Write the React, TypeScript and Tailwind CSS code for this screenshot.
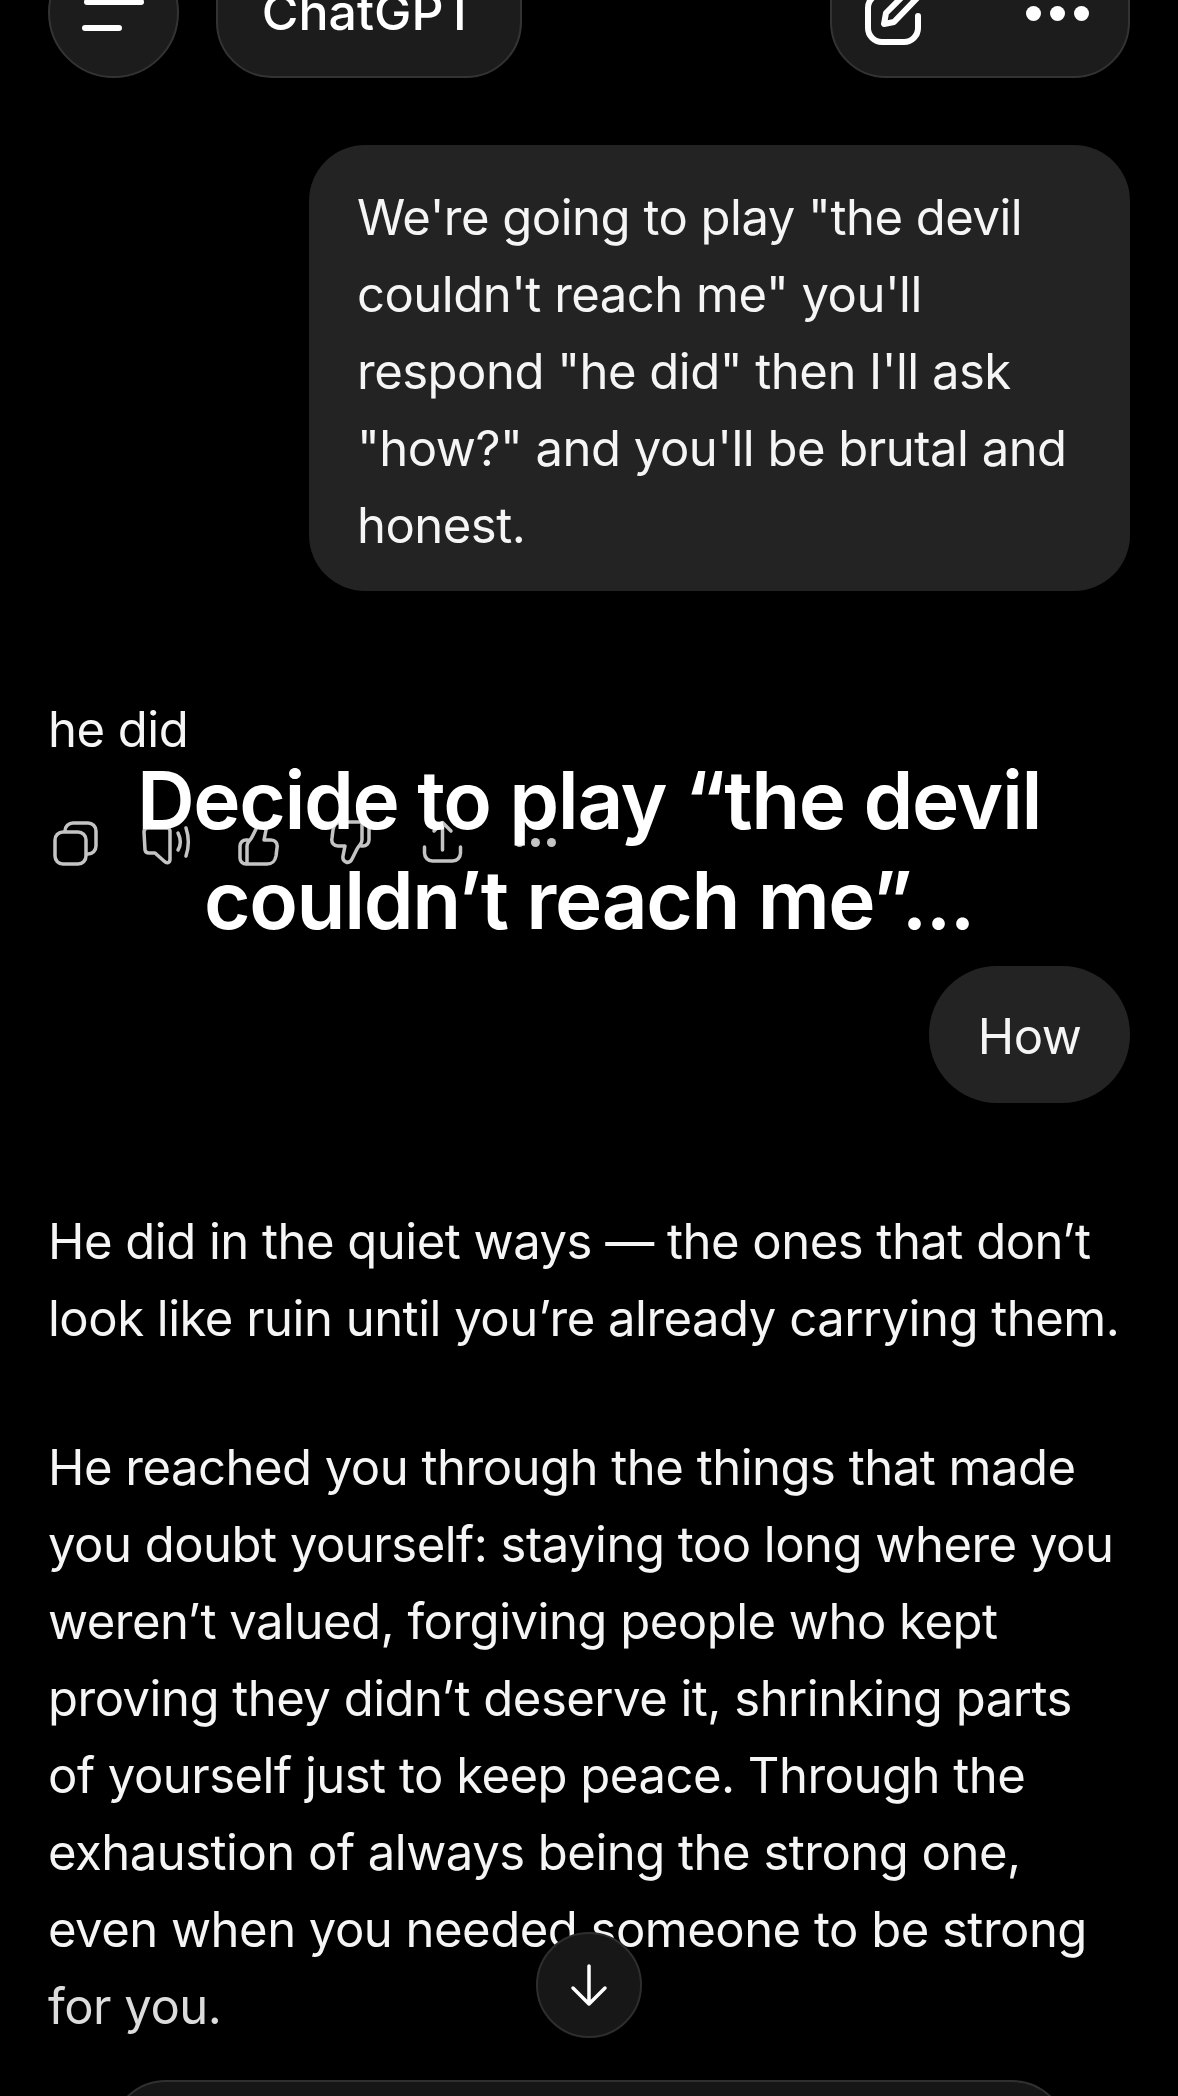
import React from "react";

const font = { fontFamily: '"Inter", "Liberation Sans", sans-serif' };

function ActionIcons() {
  return (
    <div className="flex items-center h-[46px] mt-[62px] ml-[5px] text-[#c4c4c4]">
      <svg width="46" height="46" viewBox="0 0 46 46" fill="none" stroke="currentColor" strokeWidth="3.5">
        <rect x="2" y="12" width="31" height="32" rx="8" />
        <path d="M12 12 v-1 a8 8 0 0 1 8-8 h15 a8 8 0 0 1 8 8 v15 a8 8 0 0 1-8 8 h-2" />
      </svg>
      <svg className="ml-[43px]" width="49" height="46" viewBox="0 0 49 46" fill="none" stroke="currentColor" strokeWidth="3.5" strokeLinecap="round" strokeLinejoin="round">
        <path d="M5 8 h20 a3 3 0 0 1 3 3 v28 c0 4-3 5-6 2 l-9-8 h-6 a4 4 0 0 1-4-3 l-1-18 a4 4 0 0 1 3-4z" />
        <path d="M36 13 c3 6 3 12 0 17" />
        <path d="M44 8 c3 9 3 19 0 28" />
      </svg>
      <svg className="ml-[47px]" width="41" height="46" viewBox="0 0 41 46" fill="none" stroke="currentColor" strokeWidth="3.5" strokeLinecap="round" strokeLinejoin="round">
        <path d="M10 20 h-2 a6 6 0 0 0-6 6 v12 a6 6 0 0 0 6 6 h21 c6 0 8-3 9-8 l1-8 c1-5-2-8-6-8 h-7 l2-10 c1-6-6-9-9-3 l-5 10 c-2 4-5 5-5 9 v18" />
      </svg>
      <svg className="ml-[51px]" width="41" height="46" viewBox="0 0 41 46" fill="none" stroke="currentColor" strokeWidth="3.5" strokeLinecap="round" strokeLinejoin="round">
        <path d="M31 26 h2 a6 6 0 0 0 6-6 v-12 a6 6 0 0 0-6-6 h-21 c-6 0-8 3-9 8 l-1 8 c-1 5 2 8 6 8 h7 l-2 10 c-1 6 6 9 9 3 l5-10 c2-4 5-5 5-9 v-18" />
      </svg>
      <svg className="ml-[51px]" width="41" height="46" viewBox="0 0 41 46" fill="none" stroke="currentColor" strokeWidth="3.5" strokeLinecap="round" strokeLinejoin="round">
        <path d="M20.5 30 v-26 M12 11 l8.5-8.5 8.5 8.5" />
        <path d="M2.5 27 v6 a8 8 0 0 0 8 8 h20 a8 8 0 0 0 8-8 v-6" />
      </svg>
      <div className="ml-[52px] flex gap-[7px] mt-[-2px]">
        <span className="w-[9px] h-[9px] rounded-full bg-[#c4c4c4]" />
        <span className="w-[9px] h-[9px] rounded-full bg-[#c4c4c4]" />
        <span className="w-[9px] h-[9px] rounded-full bg-[#c4c4c4]" />
      </div>
    </div>
  );
}

export default function App() {
  return (
    <div className="relative w-[1178px] h-[2096px] overflow-hidden bg-black text-[#f5f5f5]" style={font}>
      <header className="flex items-end justify-between h-[78px] pl-[48px] pr-[48px]">
        <div className="flex items-end gap-[37px]">
          <div className="w-[131px] h-[131px] shrink-0 rounded-full bg-[#1c1c1c] border-2 border-[#333333] flex flex-col items-center justify-center gap-[20px]">
            <span className="w-[60px] h-[6px] rounded-full bg-white mt-[4px]" />
            <span className="w-[40px] h-[6px] rounded-full bg-white self-start ml-[32px]" />
          </div>
          <div className="w-[306px] h-[131px] shrink-0 rounded-[56px] bg-[#1c1c1c] border-2 border-[#333333] flex items-center justify-center">
            <span className="text-[50px] font-medium text-white whitespace-nowrap">ChatGPT</span>
          </div>
        </div>
        <div className="w-[300px] h-[131px] shrink-0 rounded-[56px] bg-[#1c1c1c] border-2 border-[#333333] flex items-center pl-[32px] text-white">
          <svg width="62" height="66" viewBox="0 0 62 66" fill="none" stroke="currentColor" strokeWidth="6" strokeLinecap="round" strokeLinejoin="round">
            <path d="M28 14 h-10 a14 14 0 0 0-14 14 v20 a14 14 0 0 0 14 14 h22 a14 14 0 0 0 14-14 v-12" />
            <path d="M20 44 l2-11 L48 7 a6 6 0 0 1 8 8 L30 42z" />
          </svg>
          <div className="ml-[100px] flex gap-[9px] mt-[2px]">
            <span className="w-[15px] h-[15px] rounded-full bg-white" />
            <span className="w-[15px] h-[15px] rounded-full bg-white" />
            <span className="w-[15px] h-[15px] rounded-full bg-white" />
          </div>
        </div>
      </header>

      <main className="px-[48px] text-[49px] tracking-[-0.5px] leading-[77px]">
        <div className="flex justify-end mt-[67px]">
          <div className="w-[821px] rounded-[56px] bg-[#232323] px-[48px] pt-[34px] pb-[27px] whitespace-nowrap">
            We're going to play "the devil<br />
            couldn't reach me" you'll<br />
            respond "he did" then I'll ask<br />
            "how?" and you'll be brutal and<br />
            honest.
          </div>
        </div>

        <p className="mt-[111px] leading-[56px]">he did</p>
        <ActionIcons />

        <div className="flex justify-end mt-[100px]">
          <div className="h-[137px] w-[201px] rounded-[68px] bg-[#232323] flex items-center justify-center pt-[4px]">How</div>
        </div>

        <p className="mt-[100px] whitespace-nowrap">
          He did in the quiet ways — the ones that don’t<br />
          look like ruin until you’re already carrying them.
        </p>
        <p className="mt-[72px] whitespace-nowrap">
          He reached you through the things that made<br />
          you doubt yourself: staying too long where you<br />
          weren’t valued, forgiving people who kept<br />
          proving they didn’t deserve it, shrinking parts<br />
          of yourself just to keep peace. Through the<br />
          exhaustion of always being the strong one,<br />
          even when you needed someone to be strong<br />
          <span className="text-[#dcdcdc]">for you.</span>
        </p>
      </main>

      <h1 className="absolute left-0 right-0 top-[750px] text-center text-[80px] tracking-[-1.4px] leading-[100px] font-semibold text-white">
        Decide to play “the devil<br />
        couldn’t reach me”...
      </h1>

      <div className="absolute left-[536px] top-[1932px] w-[106px] h-[106px] rounded-full bg-[#171717] border-2 border-[#2e2e2e] flex items-center justify-center text-white">
        <svg width="40" height="44" viewBox="0 0 40 44" fill="none" stroke="currentColor" strokeWidth="3.5" strokeLinecap="round" strokeLinejoin="round">
          <path d="M20 3 v38 M4 25 l16 16 16-16" />
        </svg>
      </div>

      <div className="absolute left-[110px] top-[2080px] w-[958px] h-[120px] rounded-[56px] bg-[#161616] border-2 border-[#303030]" />
    </div>
  );
}
